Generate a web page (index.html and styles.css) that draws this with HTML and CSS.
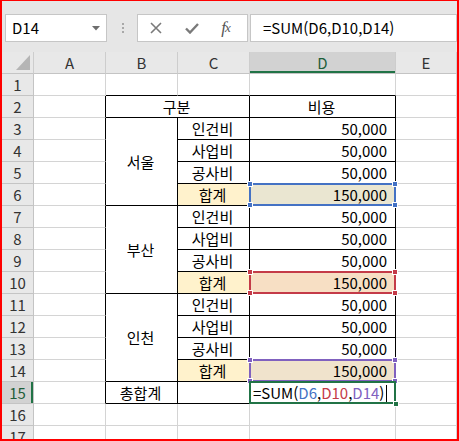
FILE: index.html
```html
<!DOCTYPE html>
<html lang="ko">
<head>
  <meta charset="UTF-8">
  <title>sum</title>
  <link rel="stylesheet" href="styles.css">
</head>
<body>
  <div class="window">
    <div class="toolbar">
      <div class="namebox">
        <span>D14</span>
        <svg class="drop" width="8" height="5" viewBox="0 0 8 5"><polygon points="0,0 8,0 4,4.5" fill="#6e6e6e"/></svg>
      </div>
      <div class="dots"><i></i><i></i><i></i></div>
      <div class="buttons">
        <span class="btn">
          <svg width="12" height="12" viewBox="0 0 12 12"><path d="M1 1 L11 11 M11 1 L1 11" stroke="#7a7a7a" stroke-width="1.6" fill="none"/></svg>
        </span>
        <span class="btn">
          <svg width="14" height="11" viewBox="0 0 14 11"><path d="M1 5.5 L5 9.5 L13 1" stroke="#7a7a7a" stroke-width="2.4" fill="none"/></svg>
        </span>
        <span class="btn fx"><i>f</i><sub>x</sub></span>
      </div>
      <div class="formula">=SUM(D6,D10,D14)</div>
    </div>

    <table class="sheet">
      <colgroup>
        <col class="c-hd"><col class="c-a"><col class="c-b"><col class="c-c"><col class="c-d"><col class="c-e">
      </colgroup>
      <tr class="cols">
        <th class="corner"><svg width="14" height="15" viewBox="0 0 14 15"><polygon points="14,0 14,15 0,15" fill="#b5b5b5"/></svg></th>
        <th>A</th><th>B</th><th>C</th><th class="sel-col">D</th><th>E</th>
      </tr>
      <tr><th>1</th><td></td><td class="edge-b"></td><td class="edge-b"></td><td class="edge-b"></td><td></td></tr>
      <tr><th>2</th><td class="edge-r"></td><td class="box mid" colspan="2">구분</td><td class="box mid">비용</td><td></td></tr>

      <tr><th>3</th><td class="edge-r"></td><td class="box mid" rowspan="4">서울</td><td class="box mid">인건비</td><td class="box num">50,000</td><td></td></tr>
      <tr><th>4</th><td class="edge-r"></td><td class="box mid">사업비</td><td class="box num">50,000</td><td></td></tr>
      <tr><th>5</th><td class="edge-r"></td><td class="box mid">공사비</td><td class="box num">50,000</td><td></td></tr>
      <tr><th>6</th><td class="edge-r"></td><td class="box mid total">합계</td>
        <td class="box num ref-cell fill-blue">150,000
          <div class="ref blue"><span class="h tl"></span><span class="h tr"></span><span class="h bl"></span><span class="h br"></span></div>
        </td><td></td></tr>

      <tr><th>7</th><td class="edge-r"></td><td class="box mid" rowspan="4">부산</td><td class="box mid">인건비</td><td class="box num">50,000</td><td></td></tr>
      <tr><th>8</th><td class="edge-r"></td><td class="box mid">사업비</td><td class="box num">50,000</td><td></td></tr>
      <tr><th>9</th><td class="edge-r"></td><td class="box mid">공사비</td><td class="box num">50,000</td><td></td></tr>
      <tr><th>10</th><td class="edge-r"></td><td class="box mid total">합계</td>
        <td class="box num ref-cell fill-red">150,000
          <div class="ref red"><span class="h tl"></span><span class="h tr"></span><span class="h bl"></span><span class="h br"></span></div>
        </td><td></td></tr>

      <tr><th>11</th><td class="edge-r"></td><td class="box mid" rowspan="4">인천</td><td class="box mid">인건비</td><td class="box num">50,000</td><td></td></tr>
      <tr><th>12</th><td class="edge-r"></td><td class="box mid">사업비</td><td class="box num">50,000</td><td></td></tr>
      <tr><th>13</th><td class="edge-r"></td><td class="box mid">공사비</td><td class="box num">50,000</td><td></td></tr>
      <tr><th>14</th><td class="edge-r"></td><td class="box mid total">합계</td>
        <td class="box num ref-cell fill-purple">150,000
          <div class="ref purple"><span class="h tl"></span><span class="h tr"></span><span class="h bl"></span><span class="h br"></span></div>
        </td><td></td></tr>

      <tr><th class="sel-row">15</th><td class="edge-r"></td><td class="box mid">총합계</td><td class="box"></td>
        <td class="box ref-cell editing">=SUM(<span class="t-blue">D6</span>,<span class="t-red">D10</span>,<span class="t-purple">D14</span>)<span class="caret"></span>
          <div class="ref active"><span class="fill"></span></div>
        </td><td></td></tr>
      <tr><th>16</th><td></td><td></td><td></td><td></td><td></td></tr>
      <tr><th>17</th><td></td><td></td><td></td><td></td><td></td></tr>
    </table>
  </div>
</body>
</html>
```

FILE: styles.css
```css
* {
  box-sizing: border-box;
}
body {
  margin: 0;
  font-family: "Noto Sans CJK KR", "Noto Sans", sans-serif;
  color: #000;
}
.window {
  width: 459px;
  height: 441px;
  border: 2px solid #ff0000;
  border-top-width: 1px;
  overflow: hidden;
  background: #fff;
}

/* 수식 입력줄 */
.toolbar {
  height: 51px;
  background: #e6e6e6;
  display: flex;
  align-items: flex-start;
  padding: 13px 0 0 3px;
}
.namebox {
  width: 102px;
  height: 28px;
  background: #fff;
  border: 1px solid #c6c6c6;
  display: flex;
  align-items: center;
  padding: 0 6px 0 6px;
  font-size: 15px;
  line-height: 20px;
}
.namebox .drop {
  margin-left: auto;
}
.dots {
  width: 2px;
  margin: 9px 13px 0 15px;
  display: flex;
  flex-direction: column;
  gap: 2px;
}
.dots i {
  display: block;
  width: 2px;
  height: 2px;
  background: #a8a8a8;
}
.buttons {
  width: 111px;
  height: 28px;
  background: #fff;
  border: 1px solid #c6c6c6;
  display: flex;
  align-items: center;
}
.btn {
  width: 36px;
  display: flex;
  justify-content: center;
  align-items: center;
}
.btn.fx {
  width: 32px;
  font-family: "Liberation Serif", serif;
  color: #555;
  font-size: 17px;
  line-height: 16px;
}
.btn.fx sub {
  font-style: italic;
  font-size: 13px;
  vertical-align: -1px;
  margin-left: -1px;
}
.formula {
  flex: 1;
  height: 28px;
  margin-left: 2px;
  background: #fff;
  border: 1px solid #c6c6c6;
  display: flex;
  align-items: center;
  padding-left: 12px;
  font-size: 15px;
  line-height: 20px;
}

/* 시트 */
.sheet {
  border-collapse: separate;
  border-spacing: 0;
  table-layout: fixed;
  width: 455px;
}
.c-hd { width: 32px; }
.c-a { width: 72px; }
.c-b { width: 72px; }
.c-c { width: 72px; }
.c-d { width: 146px; }
.c-e { width: 61px; }

.sheet td,
.sheet th {
  height: 22px;
  padding: 0 8px 0 6px;
  border-right: 1px solid #d4d4d4;
  border-bottom: 1px solid #d4d4d4;
  font-size: 15px;
  line-height: 20px;
  font-weight: normal;
  white-space: nowrap;
  vertical-align: middle;
}
.sheet th {
  background: #e8e8e8;
  color: #333;
  text-align: center;
  padding: 0;
  border-right-color: #c4c4c4;
  border-bottom-color: #c4c4c4;
}
.sheet .cols th {
  border-right-color: #cdcdcd;
}
.corner {
  text-align: right !important;
  vertical-align: bottom !important;
}
.corner svg {
  display: block;
  margin: 0 3px 3px auto;
}
.sheet th.sel-col {
  background: #d2d2d2;
  color: #1e5e3a;
  box-shadow: inset 0 -2px 0 #217346;
}
.sheet th.sel-row {
  background: #d2d2d2;
  color: #1e5e3a;
  box-shadow: inset -2px 0 0 #217346;
}

.sheet .edge-r {
  border-right-color: #000;
}
.sheet .edge-b {
  border-bottom-color: #000;
}
.sheet .box {
  border-right-color: #000;
  border-bottom-color: #000;
}
.mid {
  text-align: center;
}
.num {
  text-align: right;
}
.total {
  background: #fff2cc;
}
.fill-blue { background: #eae6d1; }
.fill-red { background: #f7dfc4; }
.fill-purple { background: #f0e3cc; }

/* 참조 범위 표시 */
.ref-cell {
  position: relative;
}
.ref {
  position: absolute;
  left: -1px;
  top: -1px;
  right: -1px;
  bottom: -1px;
  border: 2px solid;
}
.ref.blue { color: #4472c4; }
.ref.red { color: #c43b48; }
.ref.purple { color: #8061bf; }
.ref.active { color: #217346; }
.ref .h {
  position: absolute;
  width: 6px;
  height: 6px;
  background: currentColor;
  border: 1px solid #fff;
}
.h.tl { left: -4px; top: -4px; }
.h.tr { right: -4px; top: -4px; }
.h.bl { left: -4px; bottom: -4px; }
.h.br { right: -4px; bottom: -4px; }
.ref .fill {
  position: absolute;
  right: -5px;
  bottom: -5px;
  width: 6px;
  height: 6px;
  background: #217346;
  border: 1px solid #fff;
}
.editing {
  padding-left: 3px !important;
}
.t-blue { color: #4472c4; }
.t-red { color: #c43b48; }
.t-purple { color: #8061bf; }
.caret {
  display: inline-block;
  width: 1px;
  height: 17px;
  background: #000;
  margin-left: 2px;
  vertical-align: -3px;
}
```
